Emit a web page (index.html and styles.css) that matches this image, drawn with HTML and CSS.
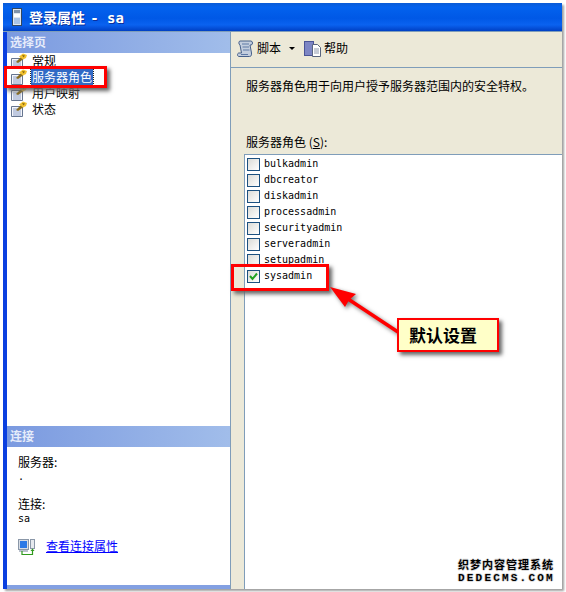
FILE: index.html

```html
<!DOCTYPE html>
<html lang="zh-CN">
<head>
  <meta charset="UTF-8">
  <title>登录属性 - sa</title>
  <link rel="stylesheet" href="styles.css">
</head>
<body>
  <svg class="defs" width="0" height="0">
    <symbol id="page-icon" viewBox="0 0 16 16">
      <path d="M.5 5.500h11v10H.5z" fill="#f4f6fb" stroke="#66758f"/>
      <path d="M2 8h8M2 10h8M2 12h8M2 14h8" stroke="#8c9dc4"/>
      <path d="M5 9l5-5 2.500 2L7 10z" fill="#8a6d1c"/>
      <path d="M8 3.500L12 .5l4 1.500-1 3-3 1.500z" fill="#f2c230"/>
      <path d="M11 2l3 .5-1.500 2z" fill="#8c6c10"/>
    </symbol>
  </svg>

  <div class="window">
    <!-- Title bar -->
    <div class="titlebar">
      <svg class="title-icon" width="10" height="18" viewBox="0 0 10 18">
        <rect x=".5" y=".5" width="9" height="17" fill="#dfe6ee" stroke="#33475f"/>
        <rect x="2" y="2" width="6" height="3" fill="#7f93ab"/>
        <rect x="2" y="6" width="6" height="3" fill="#fff"/>
        <rect x="2" y="10" width="6" height="6" fill="#a9c3e6"/>
      </svg>
      <span class="title-text">登录属性 <span class="mono-title">- sa</span></span>
    </div>

    <div class="content">
      <!-- Left side: pages and connection -->
      <div class="sidebar">
        <div class="section-head">选择页</div>
        <ul class="page-list">
          <li class="page-item"><svg class="page-icon"><use href="#page-icon"/></svg><span>常规</span></li>
          <li class="page-item selected"><svg class="page-icon"><use href="#page-icon"/></svg><span>服务器角色</span></li>
          <li class="page-item"><svg class="page-icon"><use href="#page-icon"/></svg><span>用户映射</span></li>
          <li class="page-item"><svg class="page-icon"><use href="#page-icon"/></svg><span>状态</span></li>
        </ul>

        <div class="section-head">连接</div>
        <div class="connection">
          <div class="conn-label">服务器:</div>
          <div class="conn-value">.</div>
          <div class="conn-label second">连接:</div>
          <div class="conn-value">sa</div>
          <div class="conn-link">
            <svg class="conn-icon" width="17" height="16" viewBox="0 0 17 16">
              <rect x=".5" y=".5" width="10" height="10" fill="#d7dce4" stroke="#8a97a8"/>
              <rect x="2" y="2" width="7" height="7" fill="#2a78e6"/>
              <rect x="1" y="11" width="9" height="2" fill="#b9c0cc"/>
              <rect x="12.500" y=".5" width="4" height="9" fill="#e6e9ee" stroke="#8a97a8"/>
              <path d="M4 12v3.500h10.500v-4" fill="none" stroke="#2f9a1c" stroke-width="1.200"/>
              <path d="M12.500 12l2-2.500 2 2.500z" fill="#2f9a1c"/>
            </svg>
            <a href="#">查看连接属性</a>
          </div>
        </div>
        <div class="bottom-strip"></div>
      </div>

      <!-- Right side: server roles -->
      <div class="main">
        <div class="toolbar">
          <svg class="tool-icon" width="17" height="17" viewBox="0 0 17 17">
            <path d="M3 1h11c2 0 2 4 0 4h-1l1.500 8c.3 3-1 3.500-2 3.500H2c-2 0-2-3.500 0-3.500h2.500L3 5C1.500 4.500 1.500 1 3 1z" fill="#c3cede" stroke="#46608a"/>
            <path d="M5 4h7M5.500 7h6.500M6 10h6.500M4 14.500h7" stroke="#5f7aa5"/>
          </svg>
          <span class="tool-text">脚本</span>
          <span class="caret"></span>
          <svg class="tool-icon" width="17" height="17" viewBox="0 0 17 17">
            <rect x=".5" y="1.500" width="9" height="14" fill="#7d86c4" stroke="#4b5596"/>
            <path d="M8.500 4.500h5l3 3v9h-8z" fill="#fff" stroke="#59657f"/>
            <path d="M10 9h5M10 11h5M10 13h5" stroke="#8e99ad"/>
          </svg>
          <span class="tool-text">帮助</span>
        </div>

        <div class="desc">服务器角色用于向用户授予服务器范围内的安全特权。</div>
        <div class="list-label">服务器角色 (<u>S</u>):</div>

        <div class="role-list">
          <div class="role"><span class="checkbox"></span>bulkadmin</div>
          <div class="role"><span class="checkbox"></span>dbcreator</div>
          <div class="role"><span class="checkbox"></span>diskadmin</div>
          <div class="role"><span class="checkbox"></span>processadmin</div>
          <div class="role"><span class="checkbox"></span>securityadmin</div>
          <div class="role"><span class="checkbox"></span>serveradmin</div>
          <div class="role"><span class="checkbox"></span>setupadmin</div>
          <div class="role">
            <span class="checkbox">
              <svg width="11" height="11" viewBox="0 0 11 11"><path d="M2 5l2.500 3L9 2.500" fill="none" stroke="#21a121" stroke-width="2"/></svg>
            </span>sysadmin
          </div>
        </div>
      </div>
    </div>
  </div>

  <!-- Annotations drawn over the screenshot -->
  <div class="mark mark-page"></div>
  <div class="mark mark-role"></div>
  <svg class="arrow" width="80" height="60" viewBox="0 0 80 60">
    <path d="M69 47L16 12" stroke="#ff0000" stroke-width="3.500" fill="none"/>
    <path d="M1 2L27 9L20 15L16 22z" fill="#ff0000"/>
  </svg>
  <div class="callout">默认设置</div>

  <div class="watermark">
    <div class="wm-cn">织梦内容管理系统</div>
    <div class="wm-en">DEDECMS.COM</div>
  </div>
</body>
</html>
```

FILE: styles.css

```css
/* Basic Reset */
body, div, ul, li {
  margin: 0;
  padding: 0;
  box-sizing: border-box;
}

body {
  position: relative;
  width: 566px;
  height: 592px;
  overflow: hidden;
  background-color: #fff;
  font-family: "Noto Sans CJK SC", "Liberation Sans", sans-serif;
  font-size: 12px;
  line-height: 16px;
  color: #000;
}

.defs {
  position: absolute;
}

/* Window frame */
.window {
  display: flex;
  flex-direction: column;
  width: 559px;
  height: 586px;
  margin: 3px 0 0 3px;
  box-shadow: 2px 2px 2px #a0a0a0;
}

.titlebar {
  display: flex;
  align-items: center;
  height: 29px;
  padding-left: 9px;
  border-bottom: 1px solid #7f9db9;
  background: linear-gradient(to bottom, #0a5bd6 0%, #0362ee 15%, #0058e6 55%, #0a62f0 78%, #0040c4 100%);
}

.title-icon {
  margin-right: 7px;
}

.title-text {
  font-size: 14px;
  font-weight: bold;
  color: #fff;
  text-shadow: 1px 1px 0 #0b2f9c;
}

.mono-title {
  font-family: "DejaVu Sans Mono", monospace;
  font-size: 14px;
  margin-left: 2px;
}

.content {
  flex: 1;
  display: flex;
  min-height: 0;
}

/* Left side */
.sidebar {
  display: flex;
  flex-direction: column;
  width: 228px;
  border-left: 4px solid #0a3fe0;
  border-right: 1px solid #7f9db9;
  background-color: #fff;
}

.section-head {
  height: 21px;
  padding-left: 3px;
  line-height: 19px;
  font-weight: bold;
  color: #e6ecfa;
  background: linear-gradient(to right, #7b9ae0, #a1bdea);
}

.page-list {
  flex: 1;
  list-style: none;
}

.page-item {
  display: flex;
  align-items: center;
  height: 16px;
  padding-left: 4px;
}

.page-icon {
  width: 16px;
  height: 16px;
  margin-right: 4px;
}

.page-item span {
  padding: 0 1px;
}

.page-item.selected span {
  background-color: #316ac5;
  color: #fff;
  outline: 1px dotted #222;
}

.connection {
  height: 138px;
  padding: 7px 0 0 11px;
}

.conn-value {
  height: 14px;
  line-height: 14px;
  font-family: "DejaVu Sans Mono", monospace;
  font-size: 10px;
}

.conn-label.second {
  margin-top: 12px;
}

.conn-link {
  display: flex;
  align-items: center;
  margin-top: 11px;
}

.conn-icon {
  margin-top: 2px;
}

.conn-link a {
  margin-left: 11px;
  color: #0000ff;
}

.bottom-strip {
  height: 4px;
  background-color: #83a0e2;
}

/* Right side */
.main {
  flex: 1;
  display: flex;
  flex-direction: column;
  background-color: #ece9d8;
}

.toolbar {
  display: flex;
  align-items: center;
  height: 36px;
  padding: 0 0 3px 6px;
  border-bottom: 1px solid #7f9db9;
}

.tool-text {
  margin-left: 3px;
}

.caret {
  width: 0;
  height: 0;
  margin: 0 9px 0 8px;
  border-left: 3px solid transparent;
  border-right: 3px solid transparent;
  border-top: 3px solid #000;
}

.desc {
  margin: 10px 0 0 15px;
}

.list-label {
  margin: 40px 0 0 15px;
}

.role-list {
  flex: 1;
  margin: 4px 0 0 13px;
  padding-top: 1px;
  border-left: 1px solid #7f9db9;
  border-top: 1px solid #7f9db9;
  background-color: #fff;
  font-family: "DejaVu Sans Mono", monospace;
  font-size: 10px;
}

.role {
  display: flex;
  align-items: center;
  height: 16px;
  padding-left: 2px;
}

.checkbox {
  display: flex;
  align-items: center;
  justify-content: center;
  width: 13px;
  height: 13px;
  margin-right: 4px;
  border: 1px solid #1c5180;
  background: linear-gradient(135deg, #dcdcd7, #fff);
  box-sizing: border-box;
}

/* Annotations */
.mark {
  position: absolute;
  border: 3px solid #ff0000;
  box-shadow: 3px 3px 4px #666;
}

.mark-page {
  left: 4px;
  top: 66px;
  width: 103px;
  height: 22px;
  box-sizing: border-box;
}

.mark-role {
  left: 231px;
  top: 264px;
  width: 98px;
  height: 27px;
  box-sizing: border-box;
}

.arrow {
  position: absolute;
  left: 329px;
  top: 285px;
  filter: drop-shadow(2px 2px 2px #777);
}

.callout {
  position: absolute;
  left: 397px;
  top: 318px;
  width: 102px;
  height: 34px;
  padding-left: 10px;
  box-sizing: border-box;
  border: 2px solid #ff0000;
  box-shadow: 3px 3px 4px #666;
  background-color: #ffffc8;
  font-size: 17px;
  font-weight: bold;
  line-height: 30px;
}

.watermark {
  position: absolute;
  left: 458px;
  top: 556px;
  width: 100px;
  color: #000;
  font-weight: bold;
  text-shadow: 1px 0 0 #ddd, -1px 0 0 #ddd, 0 1px 0 #ddd, 0 -1px 0 #ddd;
}

.wm-cn {
  height: 16px;
  line-height: 16px;
  font-size: 11px;
  letter-spacing: 1px;
}

.wm-en {
  height: 13px;
  line-height: 13px;
  font-family: "Liberation Mono", monospace;
  font-size: 11px;
  letter-spacing: 2.200px;
}
```
